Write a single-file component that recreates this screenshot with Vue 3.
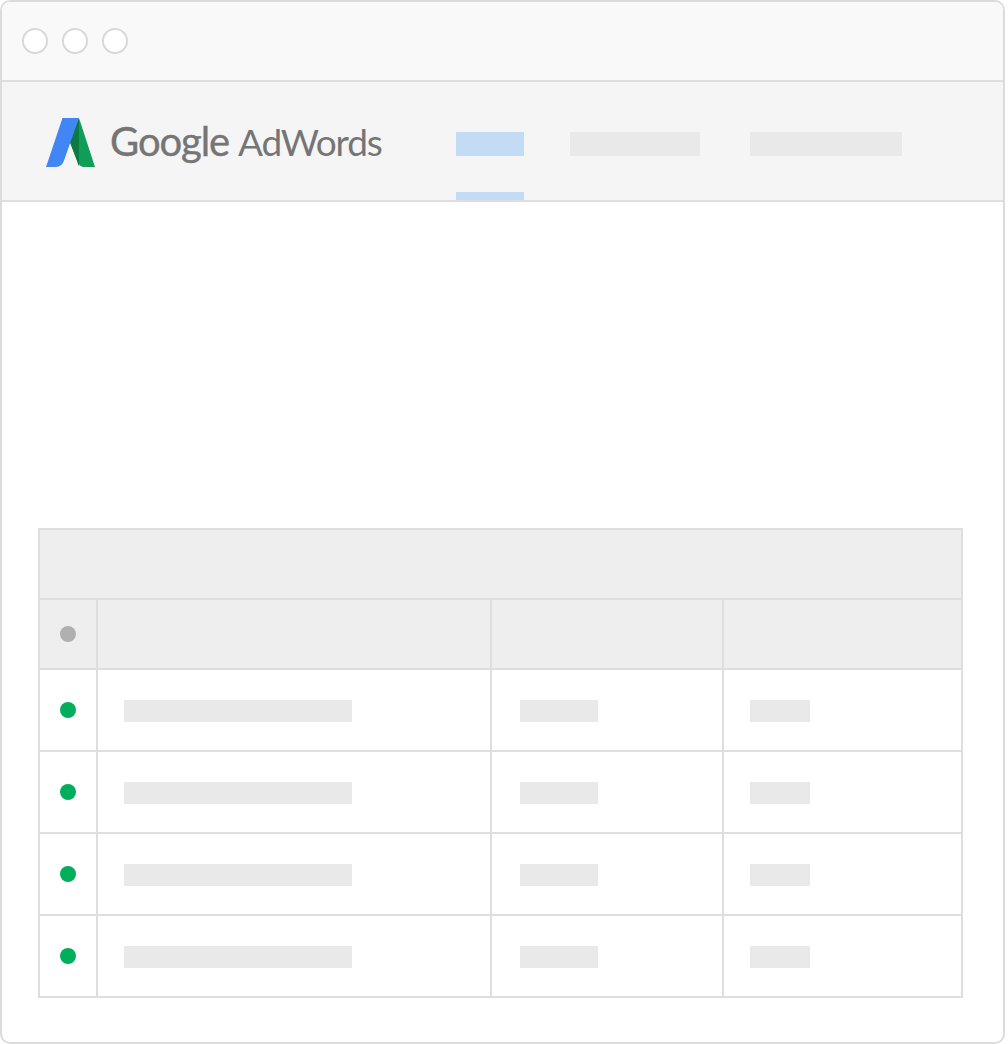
<script setup>
const rows = [1, 2, 3, 4]
</script>

<template>
  <div class="frame">
    <header class="titlebar">
      <span class="light"></span>
      <span class="light"></span>
      <span class="light"></span>
    </header>
    <nav class="navbar">
      <div class="logo">
        <svg class="mark" width="49" height="49" viewBox="46 118 49 49">
          <path fill="#0f9d58" d="M79 118 L95 167 H84.500 Q79.500 167 77.500 162 L69.500 141 Z" />
          <path fill="#0b7a43" d="M79 118 V166 Q78 165 77.500 162 L69.500 141 Z" />
          <path fill="#4285f4" d="M62.500 118 H79 L64 160.500 Q62 167 56 167 H46 Z" />
        </svg>
        <span class="wordmark"><span class="google">Google</span><span class="adwords">AdWords</span></span>
      </div>
      <div class="tabs">
        <div class="tab tab-active"><span class="tab-bar"></span><span class="tab-line"></span></div>
        <div class="tab tab-2"><span class="tab-bar"></span></div>
        <div class="tab tab-3"><span class="tab-bar"></span></div>
      </div>
    </nav>
    <main class="content">
      <section class="table">
        <div class="table-title"></div>
        <div class="row head">
          <div class="cell status"><span class="dot gray"></span></div>
          <div class="cell"></div>
          <div class="cell"></div>
          <div class="cell"></div>
        </div>
        <div v-for="r in rows" :key="r" class="row body">
          <div class="cell status"><span class="dot green"></span></div>
          <div class="cell name"><span class="ph ph-name"></span></div>
          <div class="cell mid"><span class="ph ph-mid"></span></div>
          <div class="cell last"><span class="ph ph-last"></span></div>
        </div>
      </section>
    </main>
  </div>
</template>

<style>
html, body { margin: 0; background: #fff; }
</style>

<style scoped>
.frame {
  box-sizing: border-box;
  width: 1005px;
  height: 1044px;
  border: 2px solid #dcdcdc;
  border-radius: 10px;
  background: #fff;
  overflow: hidden;
  display: flex;
  flex-direction: column;
}
.titlebar {
  box-sizing: border-box;
  height: 80px;
  flex: none;
  background: #f9f9f9;
  border-bottom: 2px solid #dedede;
  display: flex;
  align-items: center;
  gap: 14px;
  padding: 0 0 0 20px;
}
.light {
  box-sizing: border-box;
  width: 26px;
  height: 26px;
  border: 2px solid #d8d8d8;
  border-radius: 50%;
  background: #fff;
}
.navbar {
  box-sizing: border-box;
  height: 120px;
  flex: none;
  background: #f5f5f5;
  border-bottom: 2px solid #dedede;
  display: flex;
  position: relative;
}
.logo {
  display: flex;
  align-items: flex-start;
  padding: 36px 0 0 44px;
  width: 410px;
  box-sizing: border-box;
}
.mark { display: block; flex: none; }
.wordmark {
  margin-left: 15px;
  margin-top: -1px;
  font-family: Lato, sans-serif;
  line-height: 49px;
  color: #757575;
  white-space: nowrap;
  display: flex;
  align-items: baseline;
}
.google {
  font-size: 40px;
  font-weight: 400;
  -webkit-text-stroke: 0.4px #757575;
  letter-spacing: -1.1px;
}
.adwords {
  font-size: 37px;
  font-weight: 400;
  margin-left: 9px;
  letter-spacing: -1.2px;
}
.tabs { display: flex; height: 118px; }
.tab { position: relative; }
.tab-bar {
  display: block;
  height: 24px;
  margin-top: 50px;
  background: #e9e9e9;
}
.tab-active { width: 68px; margin-left: 44px; }
.tab-active .tab-bar { background: #c4dbf5; }
.tab-line {
  position: absolute;
  left: 0;
  right: 0;
  bottom: 0;
  height: 8px;
  background: #c4dbf5;
}
.tab-2 { width: 130px; margin-left: 46px; }
.tab-3 { width: 152px; margin-left: 50px; }
.content {
  flex: 1;
  padding: 326px 0 0 36px;
}
.table {
  box-sizing: border-box;
  width: 925px;
  height: 470px;
  border: 2px solid #dedede;
  border-bottom-width: 0;
  display: flex;
  flex-direction: column;
}
.table-title {
  box-sizing: border-box;
  height: 70px;
  flex: none;
  background: #eee;
  border-bottom: 2px solid #dedede;
}
.row {
  display: grid;
  grid-template-columns: 58px 394px 232px 1fr;
  flex: none;
  box-sizing: border-box;
  border-bottom: 2px solid #dedede;
}
.head { height: 70px; background: #eee; }
.body { height: 82px; background: #fff; }
.cell {
  box-sizing: border-box;
  border-right: 2px solid #dedede;
  display: flex;
  align-items: center;
}
.cell:last-child { border-right: 0; }
.status { justify-content: center; }
.dot {
  width: 16px;
  height: 16px;
  border-radius: 50%;
  display: block;
}
.gray { background: #b0b0b0; }
.green { background: #00ae5b; }
.ph { display: block; height: 22px; margin-top: 2px; background: #e9e9e9; }
.name { padding-left: 26px; }
.mid { padding-left: 28px; }
.last { padding-left: 26px; }
.ph-name { width: 228px; }
.ph-mid { width: 78px; }
.ph-last { width: 60px; }
</style>
